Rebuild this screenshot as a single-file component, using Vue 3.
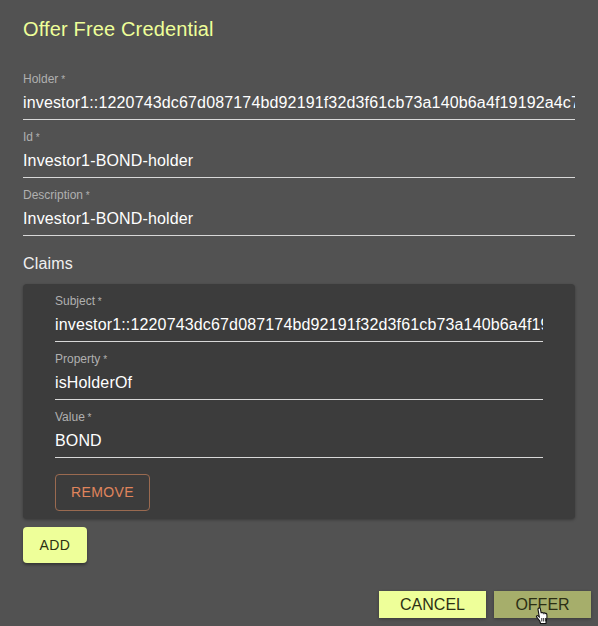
<script setup>
const top = [
  { label: 'Holder', value: 'investor1::1220743dc67d087174bd92191f32d3f61cb73a140b6a4f19192a4c7e2f0d1' },
  { label: 'Id', value: 'Investor1-BOND-holder' },
  { label: 'Description', value: 'Investor1-BOND-holder' }
]
const claim = [
  { label: 'Subject', value: 'investor1::1220743dc67d087174bd92191f32d3f61cb73a140b6a4f19192a4c7e2f0d1' },
  { label: 'Property', value: 'isHolderOf' },
  { label: 'Value', value: 'BOND' }
]
</script>

<template>
  <div class="dialog">
    <h2 class="title">Offer Free Credential</h2>
    <div class="fields">
      <label v-for="f in top" :key="f.label" class="field">
        <span class="label">{{ f.label }}<span class="star"> *</span></span>
        <input class="input" readonly :value="f.value" />
      </label>
    </div>
    <div class="claims-title">Claims</div>
    <div class="card">
      <label v-for="f in claim" :key="f.label" class="field">
        <span class="label">{{ f.label }}<span class="star"> *</span></span>
        <input class="input" readonly :value="f.value" />
      </label>
      <button class="remove">REMOVE</button>
    </div>
    <button class="add">ADD</button>
    <div class="actions">
      <button class="act cancel">CANCEL</button>
      <button class="act offer">OFFER</button>
    </div>
    <svg class="cursor" width="16" height="18" viewBox="0 0 14 18">
      <path d="M3.5 1.2c.8-.6 1.7-.1 1.9.8l.8 4.2c.2-.8 1.7-.9 2 0 .3-.6 1.6-.6 1.9.3.4-.4 1.5-.2 1.700.7.3 1.600.2 3.800-.3 5.500l-.6 3.800H5.500L4.800 14 1.700 10.200c-.7-.9.3-2 1.300-1.300l1.300 1L3 2.300c-.1-.4.1-.8.500-1.100z" fill="#fff" stroke="#111" stroke-width="1.100"/>
      <path d="M6.800 11v3.500M8.700 11v3.500M10.600 11v3.500" stroke="#111" stroke-width=".9" fill="none"/>
    </svg>
  </div>
</template>

<style>
html, body { margin: 0; background: #525252; }
</style>

<style scoped>
.dialog {
  position: relative;
  width: 598px;
  height: 626px;
  box-sizing: border-box;
  padding: 16px 23px 0;
  background: #525252;
  overflow: hidden;
  font-family: "Liberation Sans", Arial, sans-serif;
  color: #fff;
}
.title {
  margin: 0 0 28px;
  font-size: 20px;
  font-weight: 400;
  line-height: 26px;
  letter-spacing: 0.15px;
  color: #eeff99;
}
.fields { display: flex; flex-direction: column; }
.field {
  display: flex;
  flex-direction: column;
  height: 58px;
  box-sizing: border-box;
  padding-top: 2px;
}
.label {
  font-size: 12px;
  line-height: 14px;
  color: #b0b0b0;
}
.star { font-size: 10px; }
.input {
  display: block;
  width: 100%;
  box-sizing: border-box;
  height: 31px;
  margin-top: 2px;
  padding: 4px 0 6px;
  border: 0;
  border-bottom: 1px solid #d8d8d8;
  outline: 0;
  background: transparent;
  color: #fff;
  font: 400 16px/20px "Liberation Sans", Arial, sans-serif;
  letter-spacing: 0.15px;
}
.claims-title {
  margin-top: 10px;
  font-size: 16px;
  line-height: 20px;
  letter-spacing: 0.15px;
  color: #f0f0f0;
}
.card {
  margin-top: 10px;
  height: 235px;
  box-sizing: border-box;
  padding: 8px 32px 0;
  background: #3c3c3c;
  border-radius: 4px;
  box-shadow: 0 1px 3px rgba(0, 0, 0, .3);
}
.remove {
  display: block;
  margin-top: 8px;
  width: 95px;
  height: 37px;
  padding: 0 0 2px;
  background: transparent;
  border: 1px solid #9a6a50;
  border-radius: 4px;
  color: #e0855c;
  font: 400 14px "Liberation Sans", Arial, sans-serif;
  letter-spacing: 0.4px;
}
.add {
  display: block;
  margin-top: 8px;
  width: 64px;
  height: 36px;
  padding: 0;
  background: #eeff99;
  border: 0;
  border-radius: 4px;
  color: #2c2f14;
  font: 400 14px "Liberation Sans", Arial, sans-serif;
  letter-spacing: 0.4px;
  box-shadow: 0 2px 3px rgba(0, 0, 0, .35);
}
.actions {
  display: flex;
  justify-content: flex-end;
  gap: 8px;
  margin: 28px -16px 0 0;
}
.act {
  height: 27px;
  padding: 0;
  border: 0;
  color: #2c2f14;
  font: 400 16px "Liberation Sans", Arial, sans-serif;
  letter-spacing: 0;
  box-shadow: 0 1px 3px rgba(0, 0, 0, .3);
}
.cancel { width: 107px; background: #eeff99; }
.offer { width: 97px; background: #a6ae6b; }
.cursor { position: absolute; left: 534px; top: 607px; }
</style>
